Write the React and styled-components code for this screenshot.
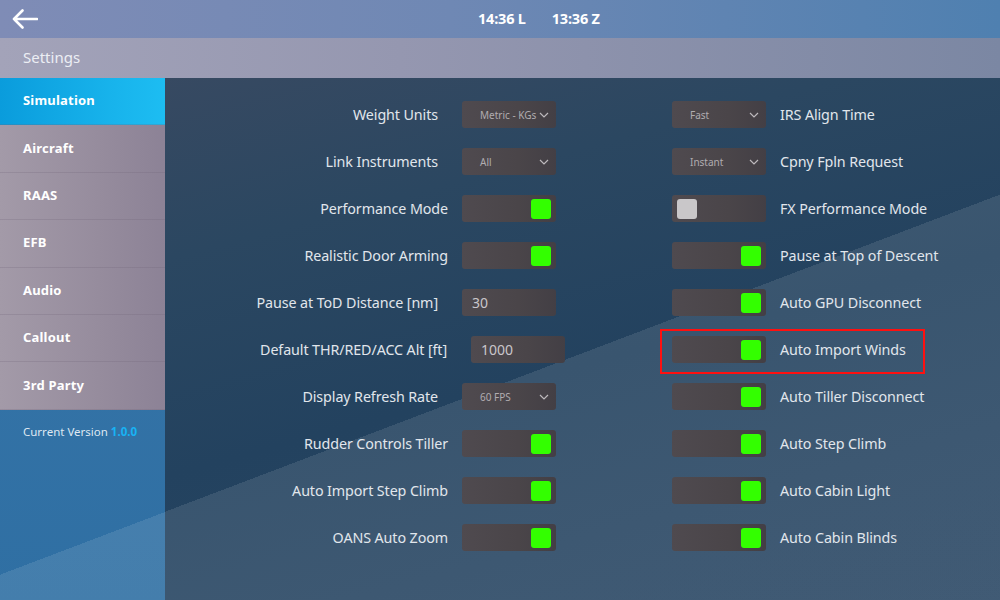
import React from 'react'
import styled, { createGlobalStyle, css } from 'styled-components'

const GlobalStyle = createGlobalStyle`
  html, body {
    margin: 0;
    padding: 0;
    width: 1000px;
    height: 600px;
    overflow: hidden;
    font-family: "Noto Sans", "Liberation Sans", sans-serif;
  }
  * { box-sizing: border-box; }
`

// the light diagonal band running from bottom-left to upper-right
const diagonal = css`
  background-attachment: fixed;
`
const band = 'linear-gradient(159.2deg, rgba(255,255,255,0) 537px, rgba(255,255,255,0.1) 537px)'

const Screen = styled.div`
  width: 1000px;
  height: 600px;
  display: grid;
  grid-template-rows: 38px 40px 1fr;
`

const TopBar = styled.header`
  display: grid;
  grid-template-columns: 478px auto 1fr;
  align-items: center;
  background: linear-gradient(90deg, #7f8cb6 0%, #6f88b4 45%, #4f80b0 100%);
  color: #fff;
  padding-left: 12px;
`

const Clock = styled.div`
  display: flex;
  gap: 26px;
  font-weight: 700;
  font-size: 14.5px;
  letter-spacing: -0.2px;
  margin-left: -12px;
  padding-bottom: 2px;
`

const TitleBar = styled.div`
  display: flex;
  align-items: center;
  padding: 0 0 3px 23px;
  background: linear-gradient(90deg, #a3a3b9 0%, #9597b0 40%, #7b87a3 100%);
  color: #eceef4;
  font-size: 15px;
`

const Body = styled.div`
  display: grid;
  grid-template-columns: 165px 1fr;
  min-height: 0;
`

const Sidebar = styled.nav`
  display: flex;
  flex-direction: column;
`

const NavItem = styled.div`
  height: 47.4px;
  display: flex;
  align-items: center;
  padding: 0 0 2px 23px;
  font-size: 13px;
  font-weight: 700;
  color: #fff;
  letter-spacing: 0.2px;
  border-bottom: 1px solid rgba(110, 100, 118, 0.25);
  background: ${p => p.$active
    ? 'linear-gradient(90deg, #0a9cdc 0%, #18b4ec 70%, #1dbdf2 100%)'
    : 'linear-gradient(90deg, #a39aa8 0%, #968c9d 60%, #8c8296 100%)'};
`

const VersionArea = styled.div`
  flex: 1;
  padding: 14px 0 0 23px;
  font-size: 11.5px;
  color: #dfe8f2;
  background: ${band}, linear-gradient(180deg, #3a78ab 0%, #2f6fa3 100%);
  ${diagonal}
`

const Version = styled.span`
  color: #18b2f4;
  font-weight: 700;
`

const Main = styled.main`
  display: grid;
  grid-template-columns: 391px 1fr;
  column-gap: 116px;
  padding-top: 13px;
  background: ${band}, linear-gradient(165deg, #3f4b62 0%, #2b4761 35%, #23425f 60%, #2b4865 100%);
  ${diagonal}
`

const Column = styled.div`
  display: flex;
  flex-direction: column;
`

const Row = styled.div`
  position: relative;
  height: 47px;
  display: flex;
  align-items: center;
  justify-content: ${p => (p.$side === 'left' ? 'flex-end' : 'flex-start')};
  gap: 14px;
  ${p => p.$highlight && css`
    &::after {
      content: '';
      position: absolute;
      left: -12px;
      top: 3px;
      width: 261px;
      height: 41px;
      border: 2px solid #ff1010;
      pointer-events: none;
    }
  `}
`

const Label = styled.span`
  font-size: 14.3px;
  color: #e1e6ec;
  white-space: nowrap;
  letter-spacing: -0.1px;
`

const Control = styled.div`
  width: 94px;
  height: 27px;
  border-radius: 3px;
  background: linear-gradient(90deg, #4f4a4f 0%, #4a4549 60%, #433f45 100%);
  display: flex;
  align-items: center;
  flex-shrink: 0;
`

// selects and inputs sit a little further from their label in the left column
const Select = styled(Control)`
  justify-content: space-between;
  padding: 0 7px 0 ${p => p.$pad || 18}px;
  font-size: 10px;
  color: #b0acb0;
  ${p => p.$side === 'left' && css`margin-left: 10px;`}
`

const Input = styled(Control)`
  padding-left: 10px;
  font-size: 14px;
  color: #c9c6ca;
  margin-left: 10px;
  ${p => p.$shift && css`margin-right: -9px;`}
`

const Toggle = styled(Control)`
  justify-content: ${p => (p.$on ? 'flex-end' : 'flex-start')};
  padding: 0 5px;
`

const Knob = styled.div`
  width: 20px;
  height: 20px;
  border-radius: 3px;
  background: ${p => (p.$on ? '#33ff00' : '#c9c7c9')};
`

const Chevron = () => (
  <svg width="10" height="6" viewBox="0 0 10 6">
    <path d="M1 1 L5 5 L9 1" fill="none" stroke="#bdb9bd" strokeWidth="1.2" />
  </svg>
)

const BackArrow = () => (
  <svg width="26" height="20" viewBox="0 0 26 20">
    <path d="M2 10 H25 M10.5 1.5 L2 10 L10.5 18.5" fill="none" stroke="#fff" strokeWidth="2.6" strokeLinecap="round" strokeLinejoin="round" />
  </svg>
)

const renderControl = (item, side) => {
  if (item.type === 'toggle') {
    return (
      <Toggle $on={item.on}>
        <Knob $on={item.on} />
      </Toggle>
    )
  }
  if (item.type === 'select') {
    return (
      <Select $pad={item.pad} $side={side}>
        <span>{item.value}</span>
        <Chevron />
      </Select>
    )
  }
  return <Input $shift={item.shift}>{item.value}</Input>
}

const leftItems = [
  { label: 'Weight Units', type: 'select', value: 'Metric - KGs' },
  { label: 'Link Instruments', type: 'select', value: 'All' },
  { label: 'Performance Mode', type: 'toggle', on: true },
  { label: 'Realistic Door Arming', type: 'toggle', on: true },
  { label: 'Pause at ToD Distance [nm]', type: 'input', value: '30' },
  { label: 'Default THR/RED/ACC Alt [ft]', type: 'input', value: '1000', shift: true },
  { label: 'Display Refresh Rate', type: 'select', value: '60 FPS' },
  { label: 'Rudder Controls Tiller', type: 'toggle', on: true },
  { label: 'Auto Import Step Climb', type: 'toggle', on: true },
  { label: 'OANS Auto Zoom', type: 'toggle', on: true }
]

const rightItems = [
  { label: 'IRS Align Time', type: 'select', value: 'Fast' },
  { label: 'Cpny Fpln Request', type: 'select', value: 'Instant' },
  { label: 'FX Performance Mode', type: 'toggle', on: false },
  { label: 'Pause at Top of Descent', type: 'toggle', on: true },
  { label: 'Auto GPU Disconnect', type: 'toggle', on: true },
  { label: 'Auto Import Winds', type: 'toggle', on: true, highlight: true },
  { label: 'Auto Tiller Disconnect', type: 'toggle', on: true },
  { label: 'Auto Step Climb', type: 'toggle', on: true },
  { label: 'Auto Cabin Light', type: 'toggle', on: true },
  { label: 'Auto Cabin Blinds', type: 'toggle', on: true }
]

const navItems = ['Simulation', 'Aircraft', 'RAAS', 'EFB', 'Audio', 'Callout', '3rd Party']

const App = () => {
  return (
    <Screen>
      <GlobalStyle />
      <TopBar>
        <BackArrow />
        <Clock>
          <span>14:36 L</span>
          <span>13:36 Z</span>
        </Clock>
      </TopBar>
      <TitleBar>Settings</TitleBar>
      <Body>
        <Sidebar>
          {navItems.map((name, i) => (
            <NavItem key={name} $active={i === 0}>{name}</NavItem>
          ))}
          <VersionArea>
            Current Version <Version>1.0.0</Version>
          </VersionArea>
        </Sidebar>
        <Main>
          <Column>
            {leftItems.map(item => (
              <Row key={item.label} $side="left">
                <Label>{item.label}</Label>
                {renderControl(item, 'left')}
              </Row>
            ))}
          </Column>
          <Column>
            {rightItems.map(item => (
              <Row key={item.label} $side="right" $highlight={item.highlight}>
                {renderControl(item, 'right')}
                <Label>{item.label}</Label>
              </Row>
            ))}
          </Column>
        </Main>
      </Body>
    </Screen>
  )
}

export default App
